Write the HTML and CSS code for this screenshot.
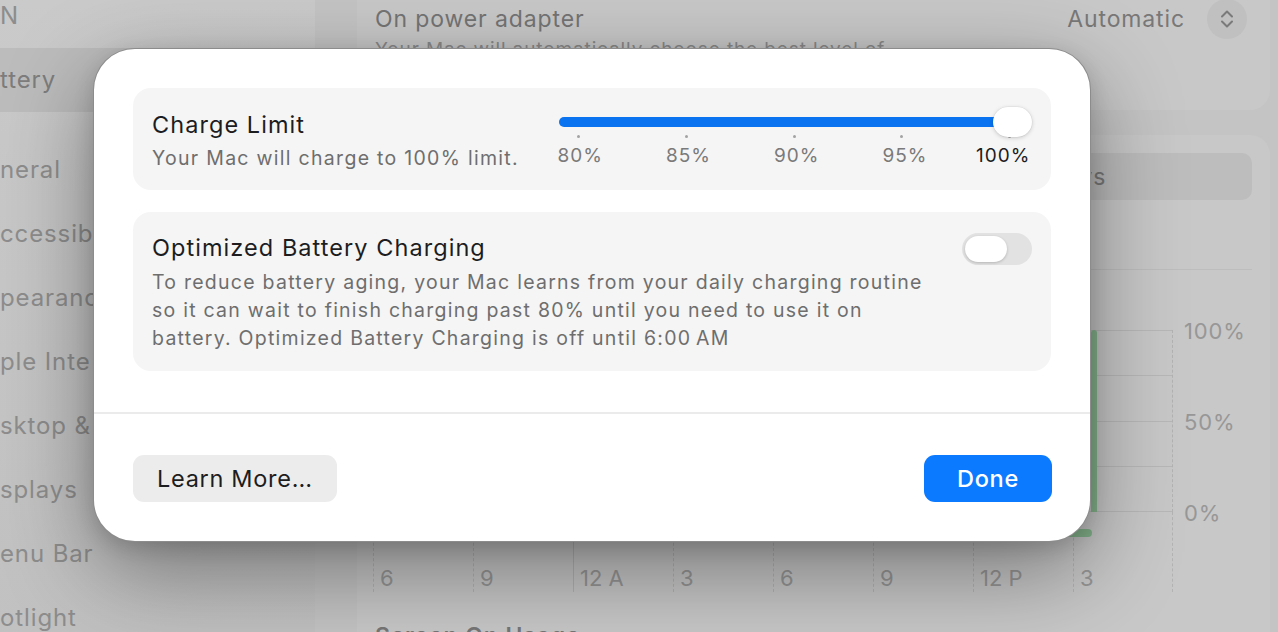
FILE: index.html
```html
<!DOCTYPE html>
<html lang="en">
<head>
    <meta charset="UTF-8">
    <meta name="viewport" content="width=device-width, initial-scale=1.0">
    <title>Battery - Charge Limit</title>
    <link rel="stylesheet" href="styles.css">
</head>
<body>
    <div class="window">
        <aside class="sidebar">
            <div class="side-item">N</div>
            <div class="side-item selected">ttery</div>
            <div class="side-item group-start">neral</div>
            <div class="side-item">ccessibili</div>
            <div class="side-item">pearanc</div>
            <div class="side-item">ple Inte</div>
            <div class="side-item">sktop &amp;</div>
            <div class="side-item">splays</div>
            <div class="side-item">enu Bar</div>
            <div class="side-item">otlight</div>
        </aside>

        <main class="content">
            <section class="group group-mode">
                <div class="mode-row">
                    <span class="mode-title">On power adapter</span>
                    <div class="popup">
                        <span>Automatic</span>
                        <span class="stepper">
                            <svg width="16" height="20" viewBox="0 0 16 20">
                                <path d="M3 7.5 L8 2.5 L13 7.5 M3 12.5 L8 17.5 L13 12.5" fill="none" stroke="#7a7a7a" stroke-width="2" stroke-linecap="round" stroke-linejoin="round"/>
                            </svg>
                        </span>
                    </div>
                </div>
                <p class="mode-note">Your Mac will automatically choose the best level of</p>
            </section>

            <section class="group group-usage">
                <div class="segmented">
                    <span>Last 24 Hours</span>
                    <span>Last 10 Days</span>
                </div>
                <div class="usage-divider"></div>

                <div class="chart">
                    <div class="plot">
                        <div class="plot-rows">
                            <div></div><div></div><div></div><div></div>
                        </div>
                        <div class="plot-cols">
                            <div></div><div class="solid"></div><div></div><div></div>
                            <div></div><div></div><div></div><div></div>
                        </div>
                        <div class="bar" style="left: 718px; width: 6px;"></div>
                    </div>
                    <div class="y-labels">
                        <span>100%</span>
                        <span>50%</span>
                        <span>0%</span>
                    </div>
                    <div class="x-labels">
                        <span>6</span><span>9</span><span class="solid">12 A</span><span>3</span>
                        <span>6</span><span>9</span><span>12 P</span><span>3</span>
                        <div class="bar-low"></div>
                    </div>
                </div>

                <h3 class="usage-title">Screen On Usage</h3>
            </section>
        </main>
    </div>

    <div class="sheet">
        <div class="sheet-body">
            <div class="card">
                <div class="card-text">
                    <div class="card-title">Charge Limit</div>
                    <div class="card-sub">Your Mac will charge to 100% limit.</div>
                </div>
                <div class="slider">
                    <div class="slider-track">
                        <div class="slider-fill"></div>
                        <div class="slider-knob"></div>
                    </div>
                    <div class="slider-ticks">
                        <i></i><i></i><i></i><i></i><i></i>
                    </div>
                    <div class="slider-labels">
                        <span>80%</span>
                        <span>85%</span>
                        <span>90%</span>
                        <span>95%</span>
                        <span class="current">100%</span>
                    </div>
                </div>
            </div>

            <div class="card card-optimized">
                <div class="card-text">
                    <div class="card-title">Optimized Battery Charging</div>
                    <div class="card-sub desc">To reduce battery aging, your Mac learns from your daily charging routine so it can wait to finish charging past 80% until you need to use it on battery. Optimized Battery Charging is off until 6:00&#8239;AM</div>
                </div>
                <div class="toggle"><div class="toggle-knob"></div></div>
            </div>
        </div>

        <div class="sheet-divider"></div>

        <div class="sheet-footer">
            <button class="btn">Learn More…</button>
            <button class="btn btn-primary">Done</button>
        </div>
    </div>
</body>
</html>
```

FILE: styles.css
```css
* {
    padding: 0;
    margin: 0;
    box-sizing: border-box;
}
body {
    width: 1278px;
    height: 632px;
    overflow: hidden;
    font-family: Inter, "Liberation Sans", sans-serif;
    letter-spacing: 0.055em;
    background-color: #c4c4c4;
    position: relative;
}

/* dimmed settings window behind the sheet */
.window {
    display: flex;
    height: 632px;
}
.sidebar {
    width: 315px;
    flex-shrink: 0;
    background: linear-gradient(180deg, #cacaca 0%, #c1c1c1 100%);
    color: #8d8d8d;
    font-size: 24px;
    overflow: hidden;
}
.side-item {
    height: 64px;
    line-height: 64px;
    white-space: nowrap;
}
.side-item:first-child {
    margin-top: -16px;
}
.side-item.selected {
    background-color: #bcbcbc;
    color: #7d7d7d;
    margin-right: 12px;
    border-radius: 0 10px 10px 0;
}
.side-item.group-start {
    margin-top: 26px;
}

.content {
    flex: 1;
    padding: 0 8px 0 42px;
    color: #777;
}
.group {
    background-color: #c8c8c8;
    border-radius: 20px;
    padding: 0 18px;
}
.group-mode {
    margin-top: -30px;
    padding-top: 30px;
    height: 140px;
}
.mode-row {
    display: flex;
    align-items: center;
    justify-content: space-between;
    height: 37px;
    padding-right: 5px;
}
.mode-title {
    font-size: 23px;
    color: #747474;
}
.popup {
    display: flex;
    align-items: center;
    gap: 22px;
    font-size: 23px;
    color: #787878;
}
.stepper {
    width: 40px;
    height: 40px;
    border-radius: 50%;
    background-color: #c0c0c0;
    display: flex;
    align-items: center;
    justify-content: center;
}
.mode-note {
    font-size: 19px;
    line-height: 24px;
    margin-top: 1px;
    color: #8a8a8a;
}

.group-usage {
    margin-top: 25px;
    padding-top: 18px;
    height: 520px;
}
.segmented {
    display: flex;
    height: 47px;
    border-radius: 10px;
    background-color: #bdbdbd;
    font-size: 23px;
    color: #7a7a7a;
}
.segmented span {
    flex: 1;
    display: flex;
    align-items: center;
    justify-content: center;
}
.usage-divider {
    height: 1px;
    background-color: #bdbdbd;
    margin-top: 69px;
}

.chart {
    display: grid;
    grid-template-columns: 800px 1fr;
    margin-top: 60px;
    margin-left: -2px;
}
.plot {
    position: relative;
    height: 182px;
    border-right: 1px dashed #b3b3b3;
}
.plot-rows {
    display: grid;
    grid-template-rows: repeat(4, 1fr);
    height: 100%;
    border-bottom: 1px solid #b8b8b8;
}
.plot-rows div {
    border-top: 1px solid #b8b8b8;
}
.plot-cols {
    position: absolute;
    inset: 0;
    display: grid;
    grid-template-columns: repeat(8, 1fr);
}
.plot-cols div {
    border-left: 1px dashed #b3b3b3;
}
.plot-cols .solid {
    border-left-style: solid;
}
.bar {
    position: absolute;
    top: 0;
    bottom: 0;
    background-color: #86b68e;
    border-radius: 3px 3px 0 0;
}
.y-labels {
    display: flex;
    flex-direction: column;
    justify-content: space-between;
    padding-left: 11px;
    margin: -12px 0 -14px;
    font-size: 22px;
    color: #979797;
}
.x-labels {
    position: relative;
    display: grid;
    grid-template-columns: repeat(8, 100px);
    height: 80px;
    border-right: 1px dashed #b3b3b3;
    font-size: 22px;
    color: #979797;
}
.x-labels span {
    border-left: 1px dashed #b3b3b3;
    padding: 53px 0 0 6px;
    letter-spacing: 0;
}
.x-labels .solid {
    border-left-style: solid;
}
.bar-low {
    position: absolute;
    left: 689px;
    top: 17px;
    width: 30px;
    height: 8px;
    border-radius: 4px;
    background-color: #86b68e;
}
.usage-title {
    margin-top: 30px;
    font-size: 23px;
    font-weight: 600;
    color: #777;
}

/* sheet */
.sheet {
    position: absolute;
    left: 93px;
    top: 48px;
    width: 998px;
    background-color: #fff;
    border: 1px solid rgba(0, 0, 0, 0.45);
    border-radius: 42px;
    box-shadow: 0 30px 90px rgba(0, 0, 0, 0.4), 0 6px 20px rgba(0, 0, 0, 0.14);
    color: #1d1d1f;
    letter-spacing: 0.055em;
}
.sheet-body {
    padding: 39px 39px 41px;
    display: flex;
    flex-direction: column;
    gap: 22px;
}
.card {
    display: flex;
    align-items: flex-start;
    justify-content: space-between;
    background-color: #f5f5f5;
    border-radius: 18px;
    padding: 22px 21px 19px 19px;
}
.card-title {
    font-size: 23.5px;
    line-height: 30px;
    letter-spacing: 0.045em;
    color: #1d1d1f;
}
.card-sub {
    font-size: 19.5px;
    line-height: 26px;
    margin-top: 5px;
    letter-spacing: 0.066em;
    color: #6e6e6e;
}
.card-optimized {
    padding: 21px 19px 19px;
}
.card-sub.desc {
    line-height: 28px;
    max-width: 790px;
    letter-spacing: 0.064em;
}

.slider {
    width: 471px;
    margin-top: -0.5px;
}
.slider-track {
    position: relative;
    height: 24px;
    display: flex;
    align-items: center;
}
.slider-fill {
    width: 100%;
    height: 10px;
    border-radius: 5px;
    background-color: #0a73f0;
}
.slider-knob {
    position: absolute;
    right: -2px;
    top: -3px;
    width: 39px;
    height: 30px;
    border-radius: 15px;
    background-color: #fff;
    box-shadow: 0 1px 4px rgba(0, 0, 0, 0.18), 0 0 0 0.5px rgba(0, 0, 0, 0.06);
}
.slider-ticks {
    display: flex;
    justify-content: space-between;
    padding: 0 19px;
    height: 3px;
    margin-top: 1px;
}
.slider-ticks i {
    width: 3px;
    height: 3px;
    margin-left: -1px;
    border-radius: 50%;
    background-color: #a3a3a3;
}
.slider-labels {
    display: grid;
    grid-template-columns: repeat(5, 108.25px);
    margin: 7px 0 0 -33px;
    line-height: 22px;
    font-size: 19px;
    letter-spacing: 0.05em;
    color: #7a7a7a;
    text-align: center;
}
.slider-labels .current {
    text-align: right;
    padding-right: 37px;
    color: #1d1d1f;
}

.toggle {
    display: flex;
    width: 70px;
    height: 32px;
    padding: 3px;
    border-radius: 16px;
    background-color: #e2e2e2;
}
.toggle-knob {
    width: 42px;
    height: 26px;
    border-radius: 13px;
    background-color: #fff;
    box-shadow: 0 1px 3px rgba(0, 0, 0, 0.2);
}

.sheet-divider {
    height: 2px;
    background-color: #ebebeb;
}
.sheet-footer {
    display: flex;
    justify-content: space-between;
    padding: 41px 38px 39px 39px;
}
.btn {
    height: 47px;
    padding: 0 24px;
    border: none;
    border-radius: 11px;
    background-color: #ececec;
    font-family: inherit;
    font-size: 23.5px;
    letter-spacing: 0.03em;
    color: #1d1d1f;
}
.btn-primary {
    width: 128px;
    background-color: #0b7aff;
    color: #fff;
    font-weight: 500;
}
```
